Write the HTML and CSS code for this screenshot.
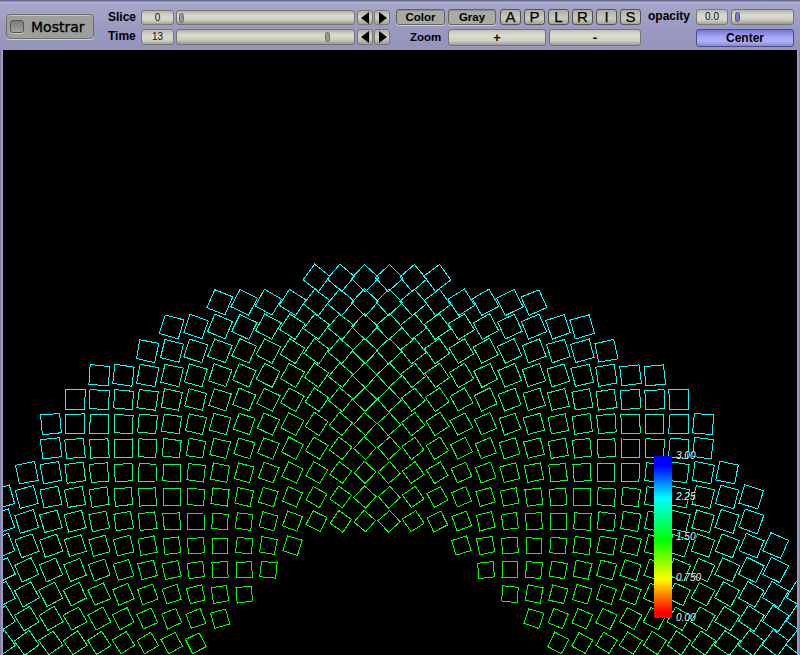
FILE: index.html
```html
<!DOCTYPE html>
<html lang="es">
<head>
<meta charset="utf-8">
<title>Mostrar</title>
<link rel="stylesheet" href="styles.css">
</head>
<body>
<div class="app">
  <header class="toolbar">
    <label class="toggle"><span class="check"></span><span class="toggle-text">Mostrar</span></label>
    <div class="sliders">
      <span class="lbl">Slice</span>
      <span class="val">0</span>
      <span class="track"><i class="knob knob-slice"></i></span>
      <span class="arrows">
        <span class="arrow"><svg width="9" height="12" viewBox="0 0 9 12"><polygon points="8,0 8,12 0,6"/></svg></span>
        <span class="arrow"><svg width="9" height="12" viewBox="0 0 9 12"><polygon points="1,0 1,12 9,6"/></svg></span>
      </span>
      <span class="lbl">Time</span>
      <span class="val">13</span>
      <span class="track"><i class="knob knob-time"></i></span>
      <span class="arrows">
        <span class="arrow"><svg width="9" height="12" viewBox="0 0 9 12"><polygon points="8,0 8,12 0,6"/></svg></span>
        <span class="arrow"><svg width="9" height="12" viewBox="0 0 9 12"><polygon points="1,0 1,12 9,6"/></svg></span>
      </span>
    </div>
    <div class="views">
      <div class="view-row">
        <button class="btn btn-flat btn-color">Color</button>
        <button class="btn btn-flat btn-gray">Gray</button>
        <div class="letters">
          <button class="btn btn-letter">A</button>
          <button class="btn btn-letter">P</button>
          <button class="btn btn-letter">L</button>
          <button class="btn btn-letter">R</button>
          <button class="btn btn-letter">I</button>
          <button class="btn btn-letter">S</button>
        </div>
      </div>
      <div class="view-row view-row-zoom">
        <span class="lbl lbl-zoom">Zoom</span>
        <button class="btn btn-zoom btn-plus">+</button>
        <button class="btn btn-zoom btn-minus">-</button>
      </div>
    </div>
    <div class="opacity">
      <div class="opacity-row">
        <span class="lbl lbl-opacity">opacity</span>
        <span class="val val-op">0.0</span>
        <span class="track track-op"><i class="knob knob-op"></i></span>
      </div>
      <button class="btn btn-center">Center</button>
    </div>
  </header>
  <main class="view">
    <svg id="grid" class="grid" viewBox="3 50 794 605" width="794" height="605" aria-label="Glyph field"></svg>
    <div class="legend">
      <div class="legend-bar"></div>
      <div class="legend-labels">
        <span>3.00</span><span>2.25</span><span>1.50</span><span>0.750</span><span>0.00</span>
      </div>
    </div>
  </main>
</div>
<script src="app.js"></script>
</body>
</html>
```
FILE: styles.css
```css
* { box-sizing: border-box; }
html, body { margin: 0; padding: 0; background: #9c9cc0; }
body { width: 800px; height: 655px; overflow: hidden; font-family: "Liberation Sans", Arial, sans-serif; }
.app { width: 800px; height: 655px; display: flex; flex-direction: column; padding: 0 3px; background: linear-gradient(90deg, #70709a 0, #a4a4c8 2px, #9c9cc0 3px, #9c9cc0 797px, #a4a4c8 798px, #70709a 800px); }

.toolbar { height: 50px; margin: 0 -3px; position: relative; display: flex; background: linear-gradient(180deg, #6c6c94 0, #6c6c94 1px, #b4b4d4 2px, #a6a6ca 4px, #9a9ac0 30px, #9494ba 50px); color: #000; }

.toggle { width: 88px; height: 25px; margin: 14px 0 0 6px; display: flex; align-items: center; padding-left: 3px; gap: 7px; border-radius: 4px; background: #9e9e9c; border: 1px solid #6e6e68; box-shadow: inset 0 1px 0 #c4c4c0, 0 1px 0 #d0d0dc; }
.check { width: 14px; height: 13px; border-radius: 3px; background: linear-gradient(180deg, #7c7c78, #a2a29c); border: 1px solid #54544e; box-shadow: 0 1px 0 #c8c8c4; }
.toggle-text { font: 14px "DejaVu Sans", sans-serif; -webkit-text-stroke: 0.35px #000; color: #000; }

.sliders { width: 282px; margin: 10px 0 0 14px; display: grid; grid-template-columns: 28px 36px 179px 33px; grid-template-rows: 15px 16px; column-gap: 2px; row-gap: 4px; align-items: stretch; }
.lbl { font-size: 12px; font-weight: 700; line-height: 15px; white-space: nowrap; }
.val { width: 33px; font-size: 10px; line-height: 13px; text-align: center; color: #111; border-radius: 3px; border: 1px solid #78786e; background: linear-gradient(180deg, #b8b8ac 0, #d8d8cc 40%, #d4d4c8 70%, #a4a4a0 100%); }
.sliders .val { margin-left: 3px; }
.track { position: relative; border-radius: 3px; border: 1px solid #74746c; background: linear-gradient(180deg, #b0b0a6 0, #dcdcd0 35%, #ccccc0 70%, #989894 100%); }
.knob { position: absolute; top: 2px; width: 5px; height: 10px; border-radius: 3px; background: #98989a; border: 1px solid #6c6c70; }
.knob-slice { left: 2px; }
.knob-time { left: 148px; }
.knob-op { left: 3px; background: #7878d0; border-color: #56569c; }
.arrows { display: flex; gap: 1px; }
.arrow { width: 16px; display: flex; align-items: center; justify-content: center; border-radius: 3px; border: 1px solid #78786e; background: linear-gradient(180deg, #b0b0a6, #d4d4c8 50%, #a0a09c); }
.arrow polygon { fill: #000; }

.views { width: 245px; margin: 9px 0 0 6px; display: flex; flex-direction: column; gap: 4px; }
.view-row { display: flex; height: 16px; }
.view-row-zoom { height: 18px; }
.btn { padding: 0; margin: 0; font-family: "Liberation Sans", Arial, sans-serif; color: #000; border-radius: 3px; }
.btn-flat { height: 16px; font-size: 11.5px; font-weight: 700; line-height: 14px; border: 1px solid #64645e; background: #aaaaa4; box-shadow: inset 0 1px 0 #8c8c88, 0 1px 0 #cfcfe0; }
.btn-color { width: 49px; margin-right: 3px; }
.btn-gray { width: 48px; margin-right: 4px; }
.letters { display: flex; gap: 3px; }
.btn-letter { width: 21px; height: 16px; font-size: 15px; line-height: 14px; -webkit-text-stroke: 0.25px #000; border: 1px solid #54544e; background: linear-gradient(180deg, #acaca2, #ccccc0 60%, #a4a49e); }
.lbl-zoom { width: 52px; padding-left: 14px; font-size: 11.5px; line-height: 16px; }
.btn-zoom { height: 17px; font-size: 13px; font-weight: 700; line-height: 14px; border: 1px solid #74746c; background: linear-gradient(180deg, #c0c0b4 0, #dcdcd0 35%, #d0d0c4 70%, #9c9c98 100%); }
.btn-plus { width: 98px; margin-right: 3px; }
.btn-minus { width: 92px; }

.opacity { width: 146px; margin: 9px 0 0 7px; display: flex; flex-direction: column; align-items: flex-end; gap: 4px; }
.opacity-row { display: flex; height: 16px; align-items: stretch; width: 146px; }
.lbl-opacity { width: 48px; font-size: 12px; line-height: 15px; }
.val-op { width: 32px; line-height: 14px; }
.track-op { margin-left: 3px; width: 63px; }
.btn-center { width: 98px; height: 18px; font-size: 12px; font-weight: 700; line-height: 15px; border: 1px solid #4c4c90; background: linear-gradient(180deg, #7474d8 0, #a4a4f0 40%, #b0b0f4 70%, #8888d0 100%); }

.view { position: relative; flex: 1; min-height: 0; background: #000; overflow: hidden; }
.grid { display: block; shape-rendering: crispEdges; }
.grid polygon { fill: none; stroke-width: 1; }
.legend { position: absolute; left: 651px; top: 400px; height: 174px; }
.legend-bar { position: absolute; left: 0; top: 6px; width: 18px; height: 162px; background: linear-gradient(180deg, #0000ff 0, #0000ff 6%, #00ffff 26%, #00ff00 52%, #ffff00 76%, #ff0000 96%, #ff0000 100%); }
.legend-labels { position: absolute; left: 22px; top: 0; height: 174px; display: flex; flex-direction: column; justify-content: space-between; font-size: 10px; font-style: italic; line-height: 12px; color: #f2f2f2; text-shadow: 1px 1px 0 #000; }
```
FILE: app.js
```js
(function () {
  var NS = "http://www.w3.org/2000/svg";
  var svg = document.getElementById("grid");
  var X0 = 2.7, DX = 24.15, Y0 = 278, DY = 24.33;
  var APEX_X = 376, APEX_Y = 702;
  // occupied columns per row of the scan
  var rows = [
    [[13, 18]], [[9, 22]], [[7, 24]], [[6, 25]], [[4, 27]], [[3, 28]],
    [[2, 29]], [[2, 29]], [[1, 30]], [[0, 31]], [[0, 31]],
    [[0, 12], [19, 32]], [[0, 11], [20, 32]], [[0, 10], [21, 33]],
    [[0, 9], [22, 33]], [[0, 8], [23, 33]]
  ];
  function noise(a, b, k) {
    var s = Math.sin(a * 12.9898 + b * 78.233 + k * 37.719) * 43758.5453;
    return (s - Math.floor(s)) - 0.5;
  }
  rows.forEach(function (spans, r) {
    spans.forEach(function (span) {
      for (var c = span[0]; c <= span[1]; c++) {
        var x = X0 + DX * c, y = Y0 + DY * r;
        var dx = APEX_X - x, dy = APEX_Y - y;
        var dist = Math.sqrt(dx * dx + dy * dy);
        var phi = Math.atan2(dx, dy);
        var theta = Math.PI / 4 - phi;
        var side = Math.max(15.5, 16 + 0.02 * (dist - 255));
        var h = side / 2, pts = [];
        [[-h, -h], [h, -h], [h, h], [-h, h]].forEach(function (p, i) {
          var px = p[0] + noise(r, c, i) * 0.7;
          var py = p[1] + noise(c, r, i + 5) * 0.7;
          pts.push(
            (x + px * Math.cos(theta) - py * Math.sin(theta)).toFixed(1) + "," +
            (y + px * Math.sin(theta) + py * Math.cos(theta)).toFixed(1)
          );
        });
        var t = Math.min(1, Math.max(0, (dist - 245) / 175));
        var poly = document.createElementNS(NS, "polygon");
        poly.setAttribute("points", pts.join(" "));
        poly.setAttribute("stroke", "rgb(0,255," + Math.round(t * 255) + ")");
        svg.appendChild(poly);
      }
    });
  });
})();
```
